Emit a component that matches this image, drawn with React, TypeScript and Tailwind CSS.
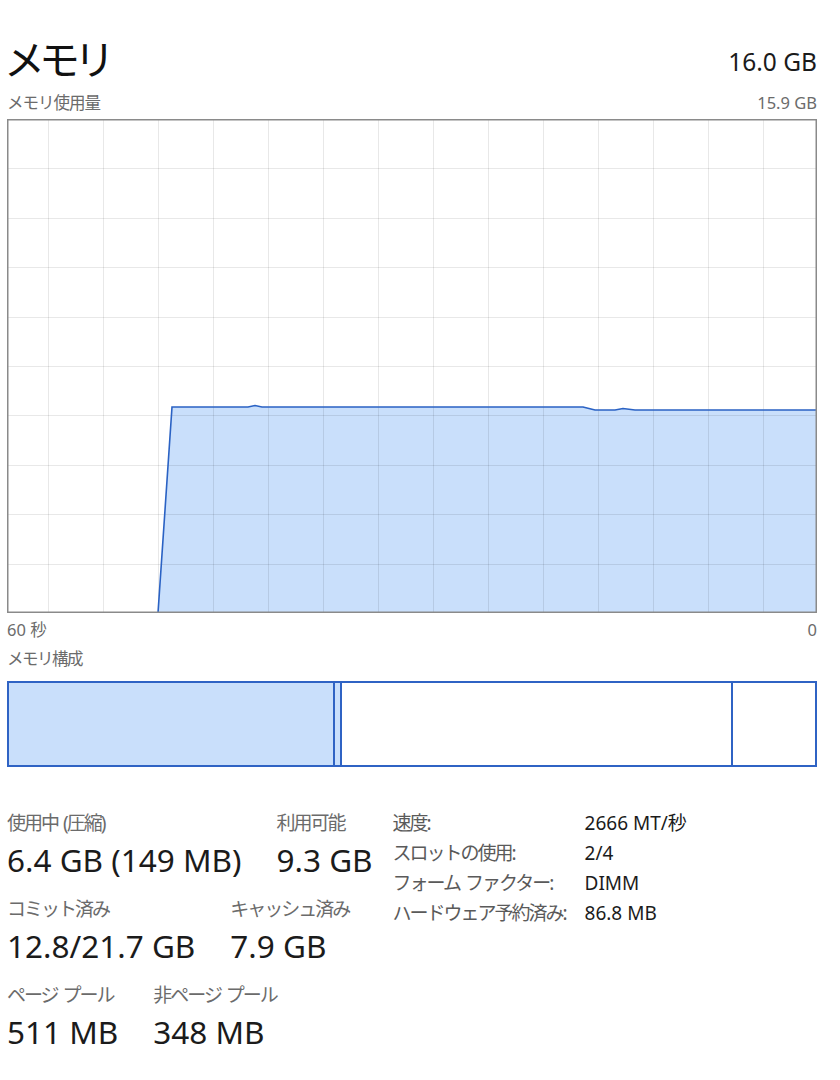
import React from "react";

const font = "font-['Noto_Sans','Noto_Sans_CJK_JP',sans-serif]";

const vLines = Array.from({ length: 14 }, (_, i) => 41 + 55 * i);
const hLines = Array.from({ length: 9 }, (_, i) => 49.4 * (i + 1));

const linePts =
  "151,494 165,288 241,288 248,286.5 255,288 576,288 588,291 608,291 616,289.5 628,291 809,291";

const UsageGraph = () => (
  <svg width={810} height={494} className="block">
    <rect x={0} y={0} width={810} height={494} fill="#ffffff" />
    <polygon points={`${linePts} 809,494`} fill="#c9dffb" />
    {vLines.map((x) => (
      <line key={`v${x}`} x1={x + 0.5} y1={0} x2={x + 0.5} y2={494} stroke="rgba(0,0,0,0.09)" />
    ))}
    {hLines.map((y) => (
      <line key={`h${y}`} x1={0} y1={Math.round(y) + 0.5} x2={810} y2={Math.round(y) + 0.5} stroke="rgba(0,0,0,0.09)" />
    ))}
    <polyline points={linePts} fill="none" stroke="#2a62c4" strokeWidth={1.6} />
    <rect x={0.75} y={0.75} width={808.5} height={492.5} fill="none" stroke="#8a8a8a" strokeWidth={1.5} />
  </svg>
);

const Stat = ({ label, value }: { label: string; value: string }) => (
  <div className="flex flex-col">
    <div className="h-[24px] text-[19px] leading-[24px] text-[#6b6b6b] tracking-[-2px] [word-spacing:2px]">{label}</div>
    <div className="mt-[5px] h-[40px] text-[31.5px] leading-[40px] text-[#1b1b1b]">{value}</div>
  </div>
);

const details = [
  ["速度:", "2666 MT/秒"],
  ["スロットの使用:", "2/4"],
  ["フォーム ファクター:", "DIMM"],
  ["ハードウェア予約済み:", "86.8 MB"],
];

export default function App() {
  return (
    <div className={`w-[840px] h-[1080px] bg-white pl-[7px] ${font}`}>
      <div className="w-[810px]">
        <div className="flex items-end justify-between pt-[20px] h-[88px]">
          <div className="-ml-[3px] text-[41px] leading-[58px] text-[#111] tracking-[-6px]">メモリ</div>
          <div className="text-[24.5px] leading-[32px] text-[#1b1b1b] pb-[10px]">16.0 GB</div>
        </div>
        <div className="flex justify-between h-[31px] text-[16.5px] leading-[30px] text-[#6b6b6b]">
          <span className="tracking-[-1px]">メモリ使用量</span>
          <span>15.9 GB</span>
        </div>
        <UsageGraph />
        <div className="flex justify-between h-[32px] text-[16.5px] leading-[34px] text-[#6b6b6b]">
          <span>60 秒</span>
          <span>0</span>
        </div>
        <div className="h-[36px] text-[16.5px] leading-[28px] text-[#6b6b6b] tracking-[-1.5px]">メモリ構成</div>
        <div className="flex h-[86px] border-2 border-[#2f63c4]">
          <div className="w-[326px] border-r-2 border-[#2f63c4] bg-[#c9dffb]" />
          <div className="w-[7px] border-r-2 border-[#2f63c4] bg-[#c9dffb]" />
          <div className="w-[391px] border-r-2 border-[#2f63c4]" />
          <div className="flex-1" />
        </div>
        <div className="flex pt-[44px]">
          <div className="flex flex-col gap-[17px]">
            <div className="flex gap-[35px]">
              <Stat label="使用中 (圧縮)" value="6.4 GB (149 MB)" />
              <Stat label="利用可能" value="9.3 GB" />
            </div>
            <div className="flex gap-[35px]">
              <Stat label="コミット済み" value="12.8/21.7 GB" />
              <Stat label="キャッシュ済み" value="7.9 GB" />
            </div>
            <div className="flex gap-[35px]">
              <Stat label="ページ プール" value="511 MB" />
              <Stat label="非ページ プール" value="348 MB" />
            </div>
          </div>
          <div className="ml-[20px] flex flex-col">
            {details.map(([k, v]) => (
              <div key={k} className="flex h-[30px] text-[19px] leading-[24px]">
                <span className="w-[192px] text-[#5a5a5a] tracking-[-2px] [word-spacing:2px]">{k}</span>
                <span className="text-[#1b1b1b]">{v}</span>
              </div>
            ))}
          </div>
        </div>
      </div>
    </div>
  );
}
